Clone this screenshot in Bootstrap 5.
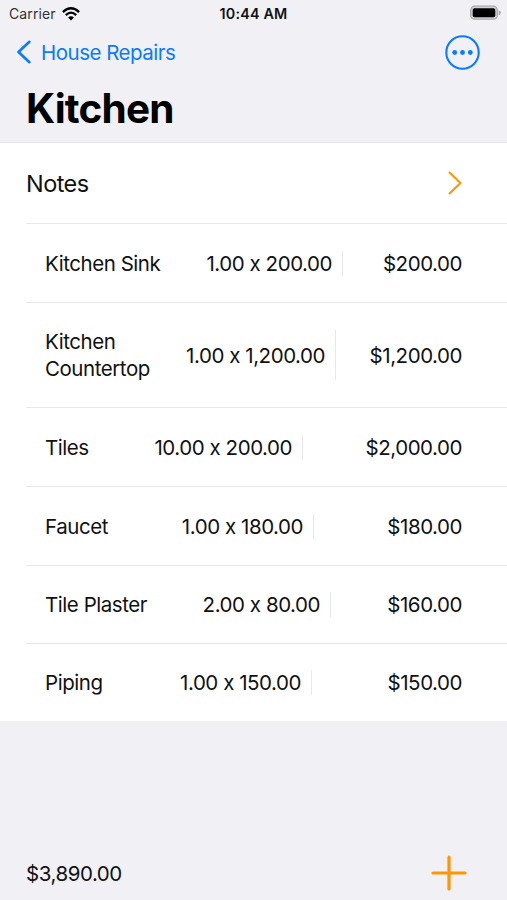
<!DOCTYPE html>
<html lang="en">
<head>
<meta charset="utf-8">
<meta name="viewport" content="width=device-width, initial-scale=1">
<title>Kitchen</title>
<link href="https://cdn.jsdelivr.net/npm/bootstrap@5.3.0/dist/css/bootstrap.min.css" rel="stylesheet">
<style>
body{font-family:Inter,"Liberation Sans",sans-serif;background:#f0f0f5;color:#111;height:900px;overflow:hidden;font-size:20.5px;line-height:27px;letter-spacing:-.45px}
svg{display:block;flex:none}
.status-bar{height:28px;font-size:14px;letter-spacing:.1px;padding:0 6px 0 9px;line-height:28px;color:#333}
.wifi{margin-left:6px;margin-bottom:1px}
.battery{margin-bottom:3px}
.clock{font-weight:600;font-size:14.3px;color:#111;letter-spacing:.22px;margin-right:3px}
.nav-line{height:48px;padding:0 27px 0 17px}
.back-link{color:#0a7aff;gap:9px;letter-spacing:-.5px}
.page-title{font-size:40.5px;line-height:66px;font-weight:700;letter-spacing:-.8px;height:66px;padding-left:26px;margin:0;color:#000}
.rows{border-top:1px solid #e8e8ec}
.line{height:79px;margin-left:26px;padding:0 45px 0 19px;border-bottom:1px solid #e8e8ea}
.line.notes{height:81px;padding-left:0;font-size:23.5px;letter-spacing:-.55px}
.line.tall{height:105px}
.line.short{height:78px}
.line.end{height:77px;border-bottom:0}
.item-part{border-right:1px solid #e8e8ea;padding-right:10px;height:25px}
.tall .item-part{height:50px}
.item-name{white-space:pre-line}
.bottom-bar{height:54px;padding:0 40px 0 26px}
</style>
<script src="https://cdn.jsdelivr.net/npm/bootstrap@5.3.0/dist/js/bootstrap.bundle.min.js"></script>
</head>
<body class="d-flex flex-column">
<header>
  <div class="status-bar row g-0 align-items-center">
    <div class="col d-flex align-items-center"><span>Carrier</span>
      <svg class="wifi" width="18" height="14" viewBox="0 0 18 14" fill="none" stroke="#000" stroke-width="2.2"><path d="M.9 5.1Q9-2.6 17.1 5.1M3.8 8.1Q9 3.1 14.2 8.1"/><path d="M9 13.5 6.1 10.6Q9 8 11.9 10.6Z" fill="#000" stroke="none"/></svg>
    </div>
    <div class="col-auto clock">10:44 AM</div>
    <div class="col d-flex justify-content-end">
      <svg class="battery" width="31" height="15" viewBox="0 0 31 15"><rect x=".7" y="1.2" width="26.6" height="13" rx="4" fill="#d2d2d5" stroke="#aaaaac" stroke-width="1.3"/><rect x="2.7" y="3.2" width="22.6" height="9" rx="1.7"/><path d="M28.6 5.2Q31 6 31 7.7T28.6 10.2Z" fill="#aaaaac"/></svg>
    </div>
  </div>
  <nav class="nav-line d-flex align-items-center justify-content-between">
    <a href="#" class="back-link d-flex align-items-center text-decoration-none">
      <svg width="15" height="24" viewBox="0 0 15 24" fill="none" stroke="#0a7aff" stroke-width="2.6" stroke-linecap="round" stroke-linejoin="round"><path d="M12.4 1.8 1.5 12l10.9 10.2"/></svg>
      <span>House Repairs</span>
    </a>
    <a href="#" aria-label="More">
      <svg width="35" height="35" viewBox="0 0 35 35"><circle cx="17.5" cy="17.5" r="16.2" fill="none" stroke="#0a7aff" stroke-width="2.1"/><g fill="#0a7aff"><circle cx="9.7" cy="17.5" r="2.4"/><circle cx="17.5" cy="17.5" r="2.4"/><circle cx="25.3" cy="17.5" r="2.4"/></g></svg>
    </a>
  </nav>
  <h1 class="page-title">Kitchen</h1>
</header>
<main class="rows bg-white">
  <div class="line notes d-flex align-items-center justify-content-between"><span>Notes</span>
    <svg width="14" height="24" viewBox="0 0 14 24" fill="none" stroke="#ff9500" stroke-width="2" stroke-linecap="round" stroke-linejoin="round"><path d="M1.5 1.5 12.5 12 1.5 22.5"/></svg>
  </div>
  <div class="line d-flex align-items-center justify-content-between"><div class="item-part d-flex align-items-center justify-content-between" style="width:298px"><span class="item-name">Kitchen Sink</span><span>1.00 x 200.00</span></div><span>$200.00</span></div>
  <div class="line tall d-flex align-items-center justify-content-between"><div class="item-part d-flex align-items-center justify-content-between" style="width:291px"><span class="item-name">Kitchen
Countertop</span><span>1.00 x 1,200.00</span></div><span>$1,200.00</span></div>
  <div class="line d-flex align-items-center justify-content-between"><div class="item-part d-flex align-items-center justify-content-between" style="width:258px"><span class="item-name">Tiles</span><span>10.00 x 200.00</span></div><span>$2,000.00</span></div>
  <div class="line d-flex align-items-center justify-content-between"><div class="item-part d-flex align-items-center justify-content-between" style="width:269px"><span class="item-name">Faucet</span><span>1.00 x 180.00</span></div><span>$180.00</span></div>
  <div class="line short d-flex align-items-center justify-content-between"><div class="item-part d-flex align-items-center justify-content-between" style="width:286px"><span class="item-name">Tile Plaster</span><span>2.00 x 80.00</span></div><span>$160.00</span></div>
  <div class="line end d-flex align-items-center justify-content-between"><div class="item-part d-flex align-items-center justify-content-between" style="width:267px"><span class="item-name">Piping</span><span>1.00 x 150.00</span></div><span>$150.00</span></div>
</main>
<footer class="bottom-bar mt-auto d-flex align-items-center justify-content-between"><span>$3,890.00</span>
  <svg width="36" height="36" viewBox="0 0 36 36" stroke="#ff9500" stroke-width="3.2" stroke-linecap="round"><path d="M18 2v32M2 18h32"/></svg>
</footer>
</body>
</html>
